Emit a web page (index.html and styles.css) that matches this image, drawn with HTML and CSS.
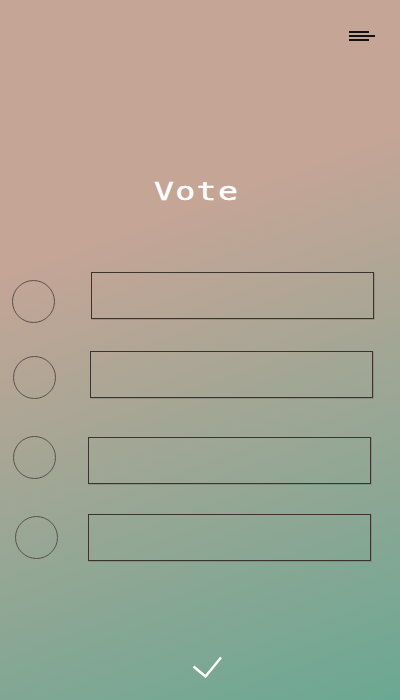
FILE: index.html
```html
<!DOCTYPE html>
<html lang="en">
<head>
<meta charset="utf-8">
<title>Vote</title>
<link rel="stylesheet" href="styles.css">
</head>
<body>
<div class="screen">
  <header class="topbar">
    <button class="menu-btn" aria-label="Menu">
      <svg width="26" height="11" viewBox="0 0 26 11">
        <rect x="0" y="0" width="20" height="2" fill="#111"/>
        <rect x="0" y="4" width="26" height="2" fill="#111"/>
        <rect x="0" y="8" width="20" height="2" fill="#111"/>
      </svg>
    </button>
  </header>

  <h1 class="title">Vote</h1>

  <div class="options">
    <div class="option option-1">
      <span class="radio"></span>
      <span class="field"></span>
    </div>
    <div class="option option-2">
      <span class="radio"></span>
      <span class="field"></span>
    </div>
    <div class="option option-3">
      <span class="radio"></span>
      <span class="field"></span>
    </div>
    <div class="option option-4">
      <span class="radio"></span>
      <span class="field"></span>
    </div>
  </div>

  <footer class="submit">
    <button class="check-btn" aria-label="Submit">
      <svg width="34" height="28" viewBox="0 0 34 28">
        <polyline points="3.5,13.5 15.5,23.5 31,4.5" fill="none" stroke="#fff" stroke-width="2.4" stroke-linecap="butt" stroke-linejoin="miter"/>
      </svg>
    </button>
  </footer>
</div>
</body>
</html>
```

FILE: styles.css
```css
html, body {
  margin: 0;
  padding: 0;
}

body {
  font-family: "DejaVu Sans Mono", "Liberation Mono", monospace;
}

.screen {
  width: 400px;
  height: 700px;
  box-sizing: border-box;
  background: linear-gradient(160deg, #c4a596 0%, #c4a596 33%, #6aa893 100%);
  overflow: hidden;
}

.topbar {
  display: flex;
  justify-content: flex-end;
  padding: 31px 25px 0 0;
}

.menu-btn,
.check-btn {
  border: 0;
  background: none;
  padding: 0;
  margin: 0;
  display: block;
  cursor: pointer;
}

.menu-btn svg,
.check-btn svg {
  display: block;
}

.title {
  margin: 136px 0 0;
  font-family: "DejaVu Sans Mono", monospace;
  font-weight: normal;
  font-size: 24px;
  line-height: 28px;
  letter-spacing: 1px;
  color: #ffffff;
  -webkit-text-stroke: 0.4px #ffffff;
  text-align: center;
  transform: scaleX(1.38);
  transform-origin: 209px 50%;
}

.options {
  margin-top: 66px;
  display: flex;
  flex-direction: column;
}

.option {
  display: flex;
  align-items: flex-start;
}

.radio {
  flex: none;
  width: 43px;
  height: 43px;
  box-sizing: border-box;
  border: 1px solid #5a514b;
  border-radius: 50%;
}

.field {
  flex: none;
  width: 283px;
  height: 47px;
  box-sizing: border-box;
  border: 1px solid #3a332e;
  box-shadow: 0.5px 0.5px 0 rgba(80, 80, 80, 0.5);
}

.option-1 {
  padding-left: 12px;
  gap: 36px;
}
.option-1 .radio { margin-top: 8px; }

.option-2 {
  margin-top: 28px;
  padding-left: 13px;
  gap: 34px;
}
.option-2 .radio { margin-top: 5px; }

.option-3 {
  margin-top: 37px;
  padding-left: 13px;
  gap: 32px;
}
.option-3 .field { margin-top: 1px; }

.option-4 {
  margin-top: 30px;
  padding-left: 15px;
  gap: 30px;
}
.option-4 .radio { margin-top: 2px; }

.submit {
  margin-top: 92px;
  display: flex;
  justify-content: center;
  padding-left: 14px;
}
```
